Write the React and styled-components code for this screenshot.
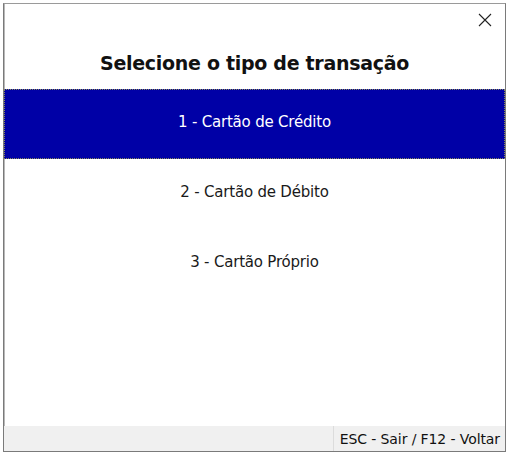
import React, { useState } from 'react';
import styled, { createGlobalStyle } from 'styled-components';

const GlobalStyle = createGlobalStyle`
  html, body {
    margin: 0;
    padding: 0;
    background: #ffffff;
  }
  body {
    font-family: "DejaVu Sans", Tahoma, sans-serif;
  }
`;

const options = [
  { id: 1, label: '1 - Cartão de Crédito' },
  { id: 2, label: '2 - Cartão de Débito' },
  { id: 3, label: '3 - Cartão Próprio' },
];

const App = () => {
  const [selected, setSelected] = useState(1);

  return (
    <>
      <GlobalStyle />
      <Page>
        <Window>
          <TopBar>
            <CloseButton aria-label="Fechar">
              <svg width="14" height="14" viewBox="0 0 14 14">
                <path d="M1 1 L13 13 M13 1 L1 13" stroke="#222" strokeWidth="1.1" fill="none" />
              </svg>
            </CloseButton>
          </TopBar>
          <Title>Selecione o tipo de transação</Title>
          <OptionList>
            {options.map(opt => (
              <Option
                key={opt.id}
                $active={selected === opt.id}
                onClick={() => setSelected(opt.id)}
              >
                {opt.label}
              </Option>
            ))}
          </OptionList>
          <StatusBar>
            <StatusPanel />
            <StatusText>ESC - Sair / F12 - Voltar</StatusText>
          </StatusBar>
        </Window>
      </Page>
    </>
  );
};

const Page = styled.div`
  width: 509px;
  height: 456px;
  padding: 3px 3px 4px 3px;
  box-sizing: border-box;
`;

const Window = styled.div`
  width: 503px;
  height: 449px;
  box-sizing: border-box;
  border: 1px solid #7a7a7a;
  border-top-color: #9a9a9a;
  box-shadow: inset 1px 0 0 #b8b8b8;
  background: #ffffff;
  display: flex;
  flex-direction: column;
`;

const TopBar = styled.div`
  height: 40px;
  display: flex;
  justify-content: flex-end;
  align-items: flex-start;
`;

const CloseButton = styled.button`
  border: none;
  background: transparent;
  padding: 0;
  margin: 9px 13px 0 0;
  width: 14px;
  height: 14px;
  display: flex;
  cursor: pointer;
`;

const Title = styled.h1`
  margin: 0;
  height: 45px;
  box-sizing: border-box;
  padding-bottom: 8px;
  display: flex;
  align-items: center;
  justify-content: center;
  font-family: "DejaVu Sans", Tahoma, sans-serif;
  font-size: 19px;
  font-weight: bold;
  color: #111111;
  letter-spacing: -0.3px;
`;

const OptionList = styled.div`
  flex: 1;
  display: flex;
  flex-direction: column;
`;

const Option = styled.div`
  height: 70px;
  flex: none;
  display: flex;
  align-items: center;
  justify-content: center;
  box-sizing: border-box;
  padding-bottom: 5px;
  font-size: 15px;
  letter-spacing: -0.2px;
  cursor: pointer;
  color: ${p => (p.$active ? '#ffffff' : '#1a1a1a')};
  background: ${p => (p.$active ? '#0000a6' : 'transparent')};
  border: 1px dotted ${p => (p.$active ? '#8a8a5a' : 'transparent')};
`;

const StatusBar = styled.div`
  height: 25px;
  background: #f0f0f0;
  display: flex;
  align-items: stretch;
  font-size: 14px;
  color: #111111;
`;

const StatusPanel = styled.div`
  flex: 1;
  border-right: 1px solid #dcdcdc;
`;

const StatusText = styled.div`
  display: flex;
  align-items: center;
  padding: 0 5px 0 6px;
  letter-spacing: -0.1px;
`;

export default App;
